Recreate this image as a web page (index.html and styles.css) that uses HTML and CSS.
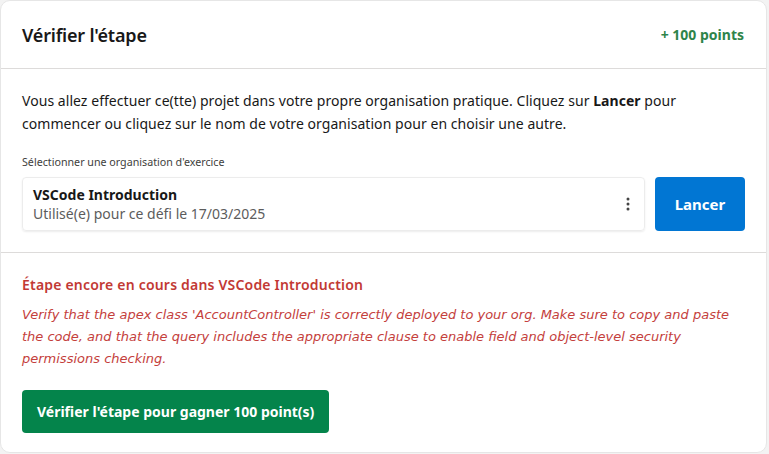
FILE: index.html
```html
<!DOCTYPE html>
<html lang="fr">
<head>
<meta charset="utf-8">
<link rel="stylesheet" href="styles.css">
</head>
<body>
<div class="card">
  <div class="card-header">
    <h2 class="title">Vérifier l'étape</h2>
    <span class="points">+ 100 points</span>
  </div>
  <div class="card-body">
    <p class="intro">Vous allez effectuer ce(tte) projet dans votre propre organisation pratique. Cliquez sur <b>Lancer</b> pour commencer ou cliquez sur le nom de votre organisation pour en choisir une autre.</p>
    <div class="label">Sélectionner une organisation d'exercice</div>
    <div class="org-row">
      <div class="org-box">
        <div class="org-text">
          <div class="org-name">VSCode Introduction</div>
          <div class="org-date">Utilisé(e) pour ce défi le 17/03/2025</div>
        </div>
        <svg class="kebab" width="4" height="14" viewBox="0 0 4 14"><circle cx="2" cy="2" r="1.5"/><circle cx="2" cy="7" r="1.5"/><circle cx="2" cy="12" r="1.5"/></svg>
      </div>
      <button class="btn-launch">Lancer</button>
    </div>
  </div>
  <div class="card-footer">
    <div class="err-title">Étape encore en cours dans VSCode Introduction</div>
    <p class="err-msg">Verify that the apex class 'AccountController' is correctly deployed to your org. Make sure to copy and paste the code, and that the query includes the appropriate clause to enable field and object-level security permissions checking.</p>
    <button class="btn-verify">Vérifier l'étape pour gagner 100 point(s)</button>
  </div>
</div>
</body>
</html>
```
FILE: styles.css
```css
html, body { margin: 0; padding: 0; }
body {
  background: #f3f3f3;
  font-family: "Noto Sans", "Open Sans", sans-serif;
  color: #181818;
}
.card {
  width: 767px;
  height: 453px;
  box-sizing: border-box;
  background: #fff;
  border: 1px solid #e6e6e6;
  border-radius: 10px;
  overflow: hidden;
}
.card-header {
  height: 67px;
  display: flex;
  align-items: center;
  justify-content: space-between;
  padding: 0 22px 0 21px;
  border-bottom: 1px solid #dddbda;
}
.title {
  margin: 0;
  font-size: 18px;
  font-weight: 600;
  letter-spacing: -0.2px;
}
.points {
  color: #2e844a;
  font-size: 14px;
  font-weight: 700;
}
.card-body {
  padding: 20px 21px 21px 21px;
  border-bottom: 1px solid #dddbda;
}
.intro {
  margin: 0;
  font-size: 14px;
  line-height: 23px;
  letter-spacing: 0.05px;
}
.intro b { font-weight: 700; }
.label {
  margin-top: 19px;
  font-size: 10.7px;
  color: #3e3e3c;
  line-height: 16px;
}
.org-row {
  margin-top: 7px;
  display: flex;
  gap: 10px;
}
.org-box {
  flex: 1;
  height: 54px;
  box-sizing: border-box;
  border: 1px solid #ececec;
  border-radius: 4px;
  box-shadow: 0 1px 2px rgba(0,0,0,0.08);
  display: flex;
  align-items: center;
  justify-content: space-between;
  padding: 0 14px 0 10px;
}
.org-name {
  font-size: 14px;
  font-weight: 700;
  line-height: 19px;
}
.org-date {
  font-size: 14px;
  color: #5c5c5c;
  line-height: 19px;
}
.kebab { fill: #444; }
.btn-launch {
  width: 90px;
  height: 54px;
  border: none;
  border-radius: 4px;
  background: #0176d3;
  color: #fff;
  font-family: inherit;
  font-size: 15px;
  font-weight: 700;
}
.card-footer {
  padding: 22px 21px 0 21px;
}
.err-title {
  color: #c23934;
  font-size: 14px;
  font-weight: 600;
  line-height: 20px;
  letter-spacing: 0.2px;
}
.err-msg {
  margin: 9px 0 0 0;
  color: #c4403c;
  font-family: "DejaVu Sans", sans-serif;
  font-style: italic;
  font-size: 13px;
  line-height: 22px;
}
.btn-verify {
  margin-top: 20px;
  height: 43px;
  padding: 0 15px;
  border: none;
  border-radius: 4px;
  background: #04844b;
  color: #fff;
  font-family: inherit;
  font-size: 14px;
  font-weight: 700;
}
```
